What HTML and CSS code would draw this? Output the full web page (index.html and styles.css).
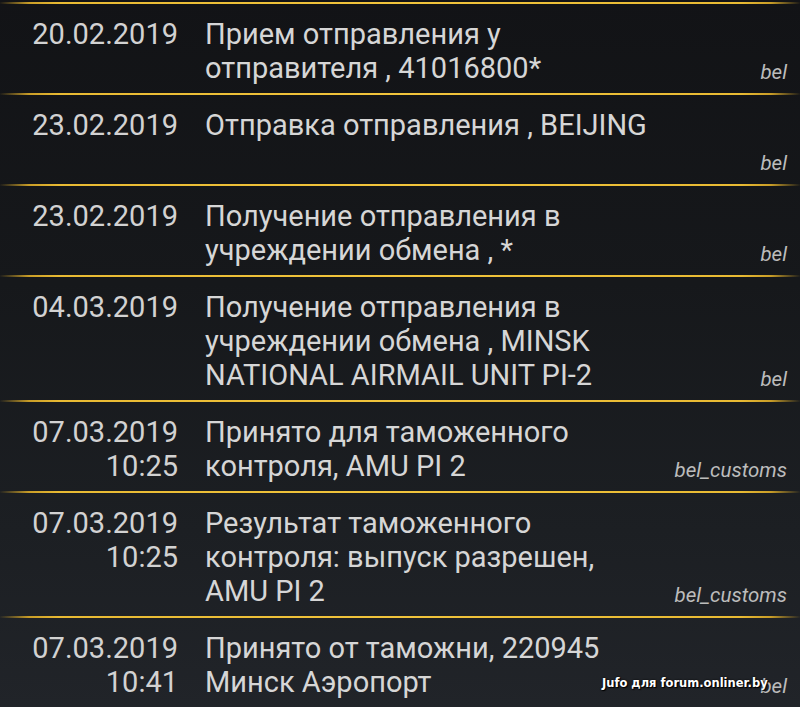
FILE: index.html
```html
<!DOCTYPE html>
<html lang="ru">
<head>
<meta charset="utf-8">
<link rel="stylesheet" href="styles.css">
</head>
<body>
<div class="screen">
  <div class="list">
    <div class="row">
      <div class="date">20.02.2019</div>
      <div class="text">Прием отправления у<br>отправителя , 41016800*</div>
      <div class="src">bel</div>
    </div>
    <div class="row">
      <div class="date">23.02.2019</div>
      <div class="text">Отправка отправления , BEIJING</div>
      <div class="src">bel</div>
    </div>
    <div class="row">
      <div class="date">23.02.2019</div>
      <div class="text">Получение отправления в<br>учреждении обмена , *</div>
      <div class="src">bel</div>
    </div>
    <div class="row">
      <div class="date">04.03.2019</div>
      <div class="text">Получение отправления в<br>учреждении обмена , MINSK<br>NATIONAL AIRMAIL UNIT PI-2</div>
      <div class="src">bel</div>
    </div>
    <div class="row">
      <div class="date">07.03.2019<br>10:25</div>
      <div class="text">Принято для таможенного<br>контроля, AMU PI 2</div>
      <div class="src">bel_customs</div>
    </div>
    <div class="row">
      <div class="date">07.03.2019<br>10:25</div>
      <div class="text">Результат таможенного<br>контроля: выпуск разрешен,<br>AMU PI 2</div>
      <div class="src">bel_customs</div>
    </div>
    <div class="row">
      <div class="date">07.03.2019<br>10:41</div>
      <div class="text">Принято от таможни, 220945<br>Минск Аэропорт</div>
      <div class="src">bel</div>
    </div>
  </div>
  <div class="watermark">Jufo для forum.onliner.by</div>
</div>
</body>
</html>
```
FILE: styles.css
```css
html, body {
  margin: 0;
  padding: 0;
}
body {
  width: 800px;
  height: 707px;
  overflow: hidden;
  background: #121316;
}
.screen {
  position: relative;
  width: 800px;
  height: 707px;
  overflow: hidden;
  background: linear-gradient(180deg, #121316 0%, #16181b 40%, #1c1f23 75%, #212429 100%);
  font-family: Roboto, "Noto Sans", sans-serif;
}
.list {
  padding-top: 2px;
}
.row {
  box-sizing: border-box;
  min-height: 91px;
  display: grid;
  grid-template-columns: 178px 1fr auto;
  column-gap: 27px;
  padding: 13px 13px 8px 0;
  border-top: 2px solid #e6b830;
  border-image: linear-gradient(90deg, rgba(230,184,48,0) 0px, #c99d27 30px, #e8ba33 60px, #f1c43c 50%, #e8ba33 740px, #c99d27 770px, rgba(230,184,48,0) 800px) 1;
}
.date {
  text-align: right;
  font-size: 29px;
  line-height: 34px;
  color: #d2d2d2;
}
.text {
  font-size: 29px;
  line-height: 34px;
  color: #d6d6d6;
}
.src {
  align-self: end;
  font-size: 20.5px;
  line-height: 26px;
  font-style: italic;
  color: #bcbcbc;
}
.watermark {
  position: absolute;
  left: 602px;
  top: 676px;
  font-family: "DejaVu Sans", sans-serif;
  font-weight: bold;
  font-size: 11.5px;
  line-height: 14px;
  color: #ffffff;
  text-shadow: 0 0 2px #000, 1px 1px 1px #000;
  white-space: nowrap;
}
```
